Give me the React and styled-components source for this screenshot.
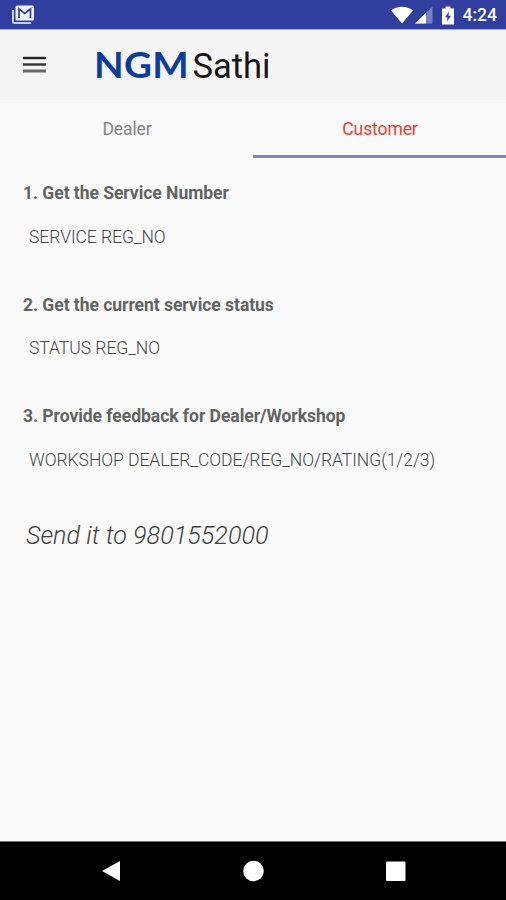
import React, { useState } from 'react';
import styled, { createGlobalStyle } from 'styled-components';

const GlobalStyle = createGlobalStyle`
  body {
    margin: 0;
    background-color: #fafafa;
    font-family: Roboto, sans-serif;
  }
`;

const Screen = styled.div`
  width: 506px;
  height: 900px;
  display: flex;
  flex-direction: column;
  overflow: hidden;
  background-color: #fafafa;
`;

const StatusBar = styled.header`
  box-sizing: border-box;
  height: 30px;
  padding: 1px 9px 0 11px;
  display: flex;
  align-items: center;
  background-color: #303f9f;
  border-bottom: 1px solid #aba9d8;
`;

const StatusIcons = styled.div`
  margin-left: auto;
  display: flex;
  align-items: center;
`;

const Radios = styled.div`
  display: flex;
  gap: 2px;
  margin-right: 9px;
`;

const Clock = styled.span`
  margin-left: 9px;
  font-size: 17.5px;
  line-height: 20px;
  font-weight: 500;
  color: white;
`;

const Toolbar = styled.div`
  height: 70px;
  padding-left: 23px;
  display: flex;
  align-items: center;
  background-color: #f5f5f5;
`;

const MenuButton = styled.button`
  width: 24px;
  height: 18px;
  margin-right: 47px;
  padding: 0;
  border: none;
  background: none;
  cursor: pointer;

  svg {
    display: block;
  }
`;

const Brand = styled.h1`
  margin: 0;
  display: flex;
  align-items: baseline;
  font-weight: 400;
`;

const BrandMark = styled.span`
  width: 98.5px;
  font-family: Lato, sans-serif;
  font-size: 36px;
  line-height: 40px;
  font-weight: 700;
  letter-spacing: 0.3px;
  color: #0c3c9c;
  transform: scaleX(1.07);
  transform-origin: left;
`;

const BrandName = styled.span`
  font-size: 34.5px;
  line-height: 40px;
  color: #161616;
`;

const Tabs = styled.nav`
  display: grid;
  grid-template-columns: 1fr 1fr;
  height: 58px;
`;

const Tab = styled.button`
  box-sizing: border-box;
  padding: 3px 0 0 1px;
  border: none;
  border-bottom: 3px solid ${props => props.$active ? '#8183bd' : 'transparent'};
  background: none;
  font-family: inherit;
  font-size: 17.5px;
  letter-spacing: -0.1px;
  color: ${props => props.$active ? '#f23b30' : '#858585'};
  cursor: pointer;
`;

const Content = styled.main`
  flex: 1;
  padding: 24px 23px 0;
`;

const Step = styled.section`
  height: 111.5px;
`;

const StepTitle = styled.h2`
  margin: 0 0 21.5px;
  font-size: 17.5px;
  line-height: 22px;
  font-weight: 700;
  letter-spacing: -0.04px;
  color: #636363;
`;

const StepCode = styled.p`
  margin: 0;
  padding-left: 6px;
  font-size: 17.5px;
  line-height: 22px;
  font-weight: 300;
  letter-spacing: -0.04px;
  white-space: nowrap;
  color: #484848;
`;

const SendTo = styled.p`
  margin: 3px 0 0 3px;
  font-size: 25.2px;
  line-height: 32px;
  font-style: italic;
  font-weight: 300;
  color: #404040;
`;

const NavBar = styled.footer`
  height: 58px;
  display: flex;
  justify-content: center;
  align-items: center;
  gap: 120px;
  background-color: black;
  border-top: 1px solid #707070;
`;

const NavButton = styled.button`
  width: 22px;
  height: 22px;
  padding: 0;
  border: none;
  background: none;
  cursor: pointer;

  svg {
    display: block;
  }
`;

const steps = [
  { title: "1. Get the Service Number", code: "SERVICE REG_NO" },
  { title: "2. Get the current service status", code: "STATUS REG_NO" },
  { title: "3. Provide feedback for Dealer/Workshop", code: "WORKSHOP DEALER_CODE/REG_NO/RATING(1/2/3)" },
];

const MailIcon = () => (
  <svg width="24" height="20" viewBox="0 0 24 20">
    <path d="M2 5v11.5q0 1.5 1.500 1.500H20" fill="none" stroke="#c9cdf0" strokeWidth="2" />
    <rect x="4.500" y="0.500" width="18.500" height="15" rx="1.500" fill="#eef0ff" />
    <path d="M8 13V4l5.700 4.500L19.500 4v9" fill="none" stroke="#303f9f" strokeWidth="1.700" />
  </svg>
);

const WifiIcon = () => (
  <svg width="22" height="18" viewBox="0 0 22 18">
    <path d="M0 4.500C6.500 -0.500 15.500 -0.500 22 4.500L11 17.500z" fill="white" />
  </svg>
);

const SignalIcon = () => (
  <svg width="18" height="18" viewBox="0 0 18 18">
    <path d="M0 17.500L17.500 0.500v17z" fill="#7780c1" />
    <path d="M0 17.500L11 6.800v10.700z" fill="white" />
  </svg>
);

const BatteryIcon = () => (
  <svg width="12" height="19" viewBox="0 0 12 19">
    <path d="M3.500 0.500h5v2H12v16H0v-16h3.500z" fill="white" />
    <path d="M7 5.500L3 11.200h2.500L5 15.700l4-6H6.500z" fill="#303f9f" />
  </svg>
);

const App = () => {
  const [activeTab, setActiveTab] = useState("Customer");

  return (
    <>
      <GlobalStyle />
      <Screen>
        <StatusBar>
          <MailIcon />
          <StatusIcons>
            <Radios>
              <WifiIcon />
              <SignalIcon />
            </Radios>
            <BatteryIcon />
            <Clock>4:24</Clock>
          </StatusIcons>
        </StatusBar>
        <Toolbar>
          <MenuButton aria-label="Menu">
            <svg width="24" height="18" viewBox="0 0 24 18">
              <path d="M0 2h23" stroke="#222" strokeWidth="2.400" />
              <path d="M0 8.500h23" stroke="#333" strokeWidth="2.400" />
              <path d="M0 15h23" stroke="#666" strokeWidth="3" />
            </svg>
          </MenuButton>
          <Brand>
            <BrandMark>NGM</BrandMark>
            <BrandName>Sathi</BrandName>
          </Brand>
        </Toolbar>
        <Tabs>
          {["Dealer", "Customer"].map((tab) => (
            <Tab key={tab} $active={activeTab === tab} onClick={() => setActiveTab(tab)}>
              {tab}
            </Tab>
          ))}
        </Tabs>
        <Content>
          {steps.map((step) => (
            <Step key={step.title}>
              <StepTitle>{step.title}</StepTitle>
              <StepCode>{step.code}</StepCode>
            </Step>
          ))}
          <SendTo>Send it to 9801552000</SendTo>
        </Content>
        <NavBar>
          <NavButton aria-label="Back">
            <svg width="22" height="22" viewBox="0 0 22 22">
              <path d="M20 1v20L2 11z" fill="white" />
            </svg>
          </NavButton>
          <NavButton aria-label="Home">
            <svg width="22" height="22" viewBox="0 0 22 22">
              <circle cx="11.500" cy="11" r="10.300" fill="white" />
            </svg>
          </NavButton>
          <NavButton aria-label="Recent apps">
            <svg width="22" height="22" viewBox="0 0 22 22">
              <rect x="2" y="1.500" width="19.500" height="19.500" rx="1" fill="white" />
            </svg>
          </NavButton>
        </NavBar>
      </Screen>
    </>
  );
};

export default App;
